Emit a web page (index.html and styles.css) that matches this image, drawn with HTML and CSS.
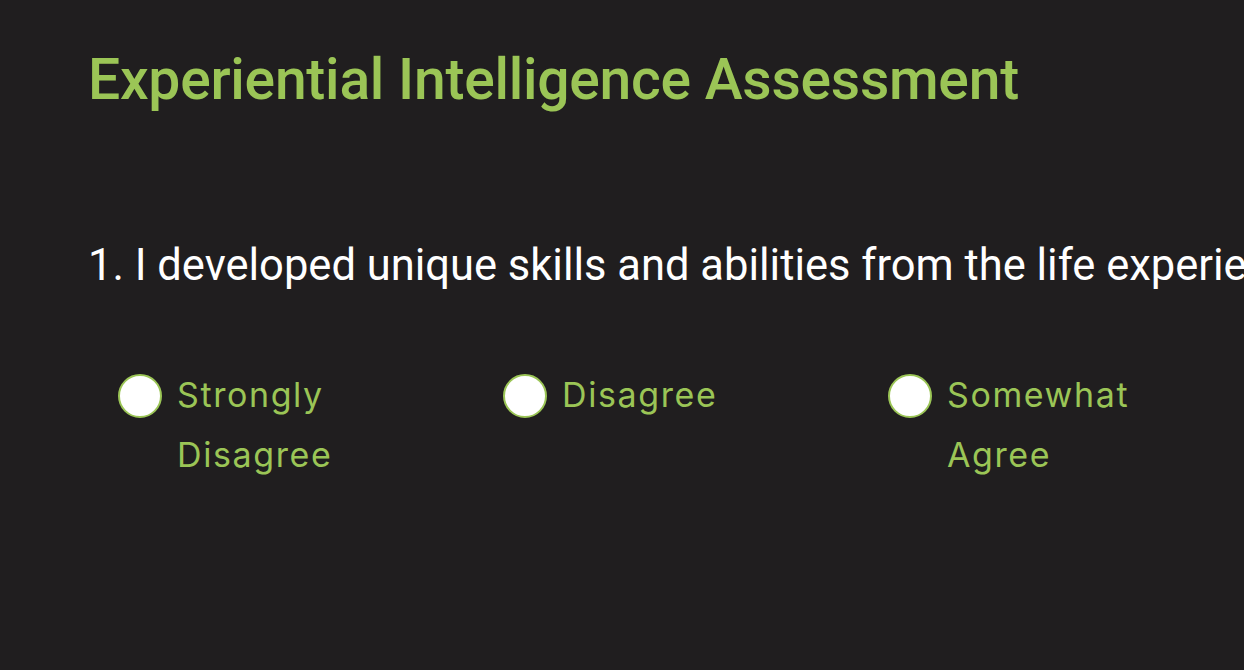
FILE: index.html
```html
<!DOCTYPE html>
<html lang="en">
<head>
<meta charset="utf-8">
<title>Experiential Intelligence Assessment</title>
<link rel="stylesheet" href="styles.css">
</head>
<body>
<main class="page">
  <h1 class="title">Experiential Intelligence Assessment</h1>
  <section class="question">
    <h2 class="question-text">1. I developed unique skills and abilities from the life experiences I have had.</h2>
    <div class="options">
      <label class="option"><span class="radio"></span><span class="option-label">Strongly Disagree</span></label>
      <label class="option"><span class="radio"></span><span class="option-label">Disagree</span></label>
      <label class="option"><span class="radio"></span><span class="option-label">Somewhat Agree</span></label>
    </div>
  </section>
</main>
</body>
</html>
```

FILE: styles.css
```css
html, body {
  margin: 0;
  padding: 0;
  background: #201e1f;
  overflow: hidden;
  height: 100%;
}
.page {
  padding: 46px 0 0 88px;
  width: 1400px;
}
.title {
  margin: 0;
  font-family: Roboto, "Liberation Sans", sans-serif;
  font-weight: 500;
  font-size: 57px;
  line-height: 68px;
  color: #9bc556;
  letter-spacing: -0.25px;
}
.question {
  margin-top: 124px;
}
.question-text {
  margin: 0;
  font-family: Roboto, "Liberation Sans", sans-serif;
  font-weight: 400;
  font-size: 43.5px;
  line-height: 56px;
  color: #ffffff;
  white-space: nowrap;
  overflow: hidden;
  width: 1156px;
}
.options {
  display: flex;
  margin-top: 78px;
  padding-left: 30px;
}
.option {
  display: flex;
  align-items: flex-start;
  width: 385px;
}
.radio {
  flex: none;
  width: 40px;
  height: 40px;
  border: 2px solid #9bc556;
  border-radius: 50%;
  background: #ffffff;
  margin-top: 2px;
}
.option-label {
  margin-left: 15px;
  width: 220px;
  font-family: Inter, sans-serif;
  font-size: 34px;
  letter-spacing: 1.6px;
  line-height: 60px;
  margin-top: -7px;
  color: #9bc556;
}
```
